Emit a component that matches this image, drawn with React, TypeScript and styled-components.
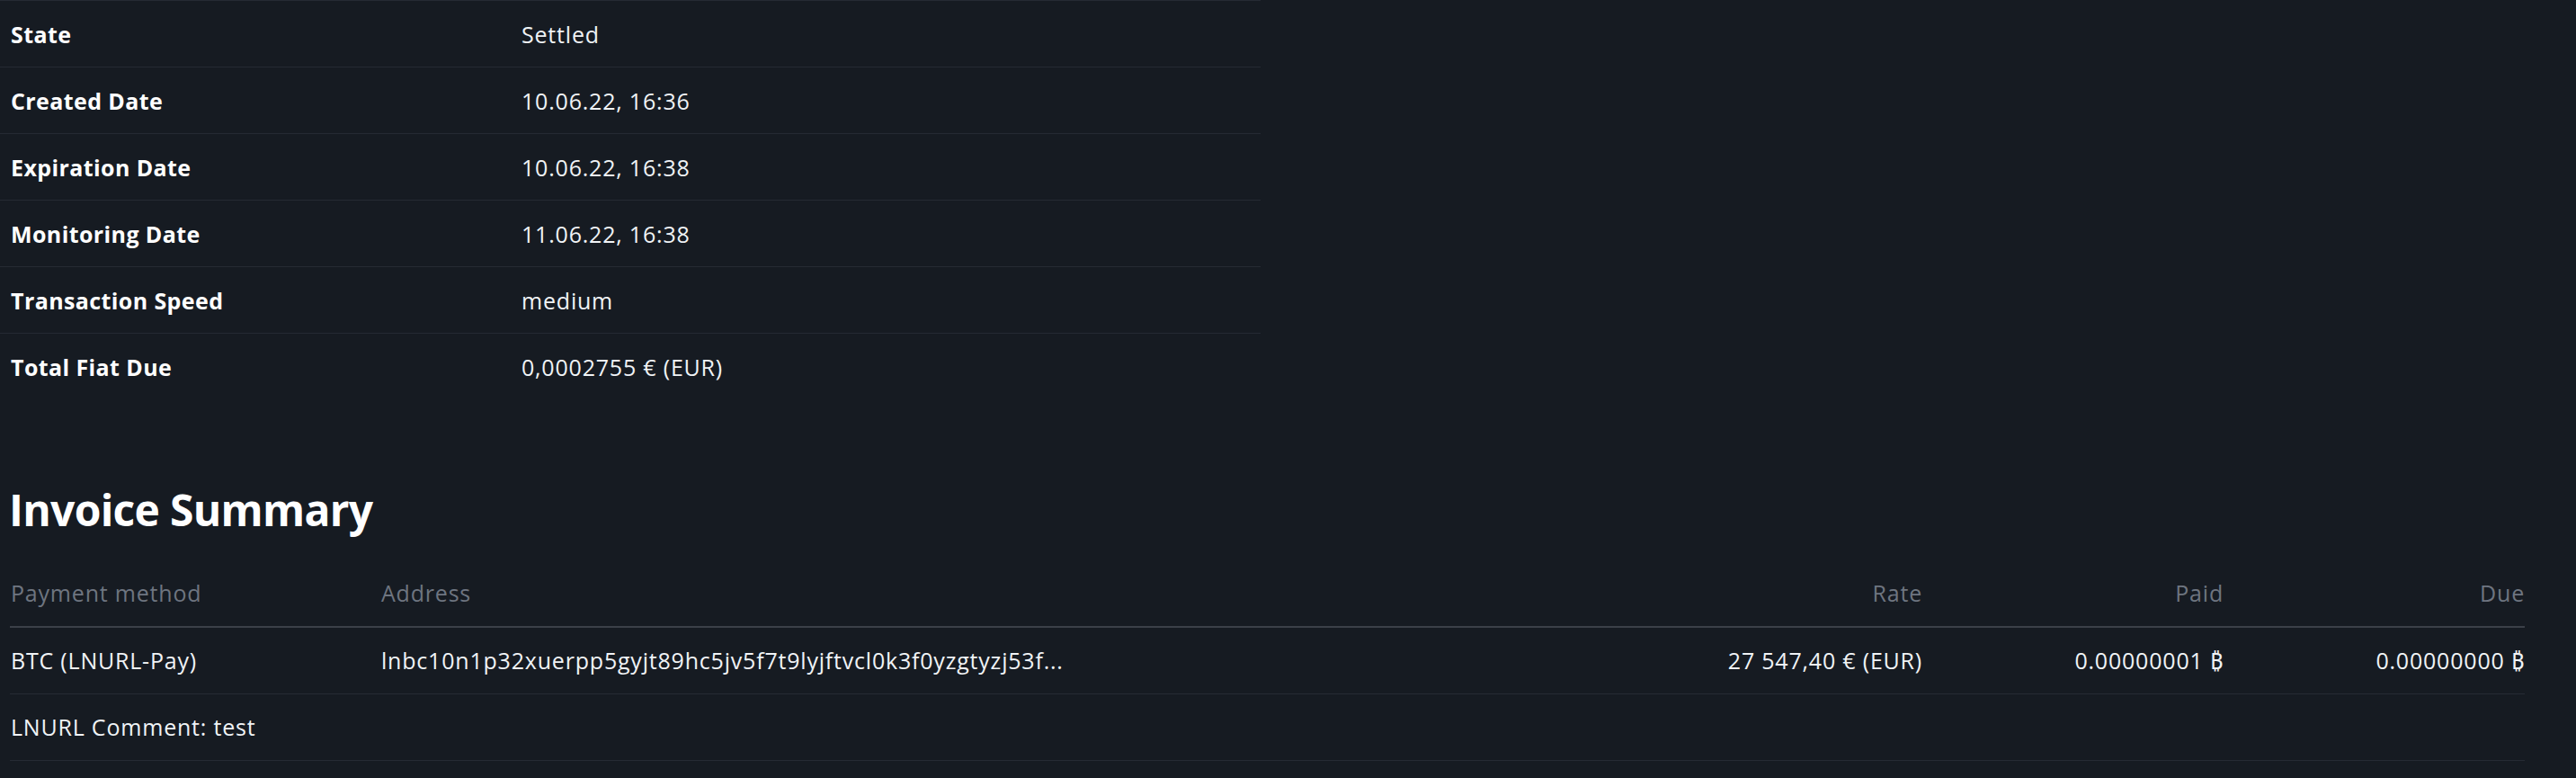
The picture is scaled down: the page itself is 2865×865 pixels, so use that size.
import React from "react";
import styled, { createGlobalStyle } from "styled-components";

const GlobalStyle = createGlobalStyle`
  html, body {
    margin: 0;
    padding: 0;
    background: #161b22;
    min-height: 100%;
  }
  body {
    font-family: "Open Sans", "Noto Sans", sans-serif;
    color: #f0f3f6;
    font-size: 25px;
    line-height: 36px;
    letter-spacing: 0.8px;
  }
`;

const Page = styled.div`
  width: 2865px;
  min-height: 865px;
  background: #161b22;
  display: flex;
  flex-direction: column;
  align-items: flex-start;
`;

const InfoTable = styled.div`
  width: 1402px;
  display: flex;
  flex-direction: column;
`;

const InfoRow = styled.div`
  display: grid;
  grid-template-columns: 568px 1fr;
  height: 74px;
  align-items: center;
  border-top: 1.5px solid #252a33;
  box-sizing: border-box;
  padding-left: 12px;
`;

const Label = styled.div`
  font-weight: 700;
  color: #ffffff;
  letter-spacing: 0.4px;
`;

const Value = styled.div`
  font-weight: 400;
  color: #f0f3f6;
`;

const Heading = styled.h2`
  margin: 94px 0 0 10px;
  font-size: 48px;
  line-height: 57.6px;
  font-weight: 700;
  letter-spacing: -0.7px;
  color: #ffffff;
`;

const SummaryTable = styled.div`
  margin: 26px 0 0 11px;
  width: 2797px;
  display: flex;
  flex-direction: column;
`;

const SummaryRow = styled.div<{ $head?: boolean }>`
  display: grid;
  grid-template-columns: 412px 1fr 335px 335px 335px;
  height: ${(p) => (p.$head ? "76px" : "74px")};
  align-items: center;
  box-sizing: border-box;
  border-bottom: ${(p) => (p.$head ? "2px solid #3b4048" : "1.5px solid #262b34")};
  color: ${(p) => (p.$head ? "#6e7580" : "#f0f3f6")};
`;

const Cell = styled.div<{ $right?: boolean; $span?: boolean }>`
  padding-left: 1px;
  text-align: ${(p) => (p.$right ? "right" : "left")};
  white-space: nowrap;
  overflow: hidden;
  ${(p) => (p.$span ? "grid-column: 1 / -1;" : "")}
`;

const info: [string, string][] = [
  ["State", "Settled"],
  ["Created Date", "10.06.22, 16:36"],
  ["Expiration Date", "10.06.22, 16:38"],
  ["Monitoring Date", "11.06.22, 16:38"],
  ["Transaction Speed", "medium"],
  ["Total Fiat Due", "0,0002755 € (EUR)"],
];

export default function App() {
  return (
    <>
      <GlobalStyle />
      <Page>
        <InfoTable>
          {info.map(([k, v]) => (
            <InfoRow key={k}>
              <Label>{k}</Label>
              <Value>{v}</Value>
            </InfoRow>
          ))}
        </InfoTable>
        <Heading>Invoice Summary</Heading>
        <SummaryTable>
          <SummaryRow $head>
            <Cell>Payment method</Cell>
            <Cell>Address</Cell>
            <Cell $right>Rate</Cell>
            <Cell $right>Paid</Cell>
            <Cell $right>Due</Cell>
          </SummaryRow>
          <SummaryRow>
            <Cell>BTC (LNURL-Pay)</Cell>
            <Cell>lnbc10n1p32xuerpp5gyjt89hc5jv5f7t9lyjftvcl0k3f0yzgtyzj53f...</Cell>
            <Cell $right>27 547,40 € (EUR)</Cell>
            <Cell $right>0.00000001 ₿</Cell>
            <Cell $right>0.00000000 ₿</Cell>
          </SummaryRow>
          <SummaryRow>
            <Cell $span>LNURL Comment: test</Cell>
          </SummaryRow>
        </SummaryTable>
      </Page>
    </>
  );
}
